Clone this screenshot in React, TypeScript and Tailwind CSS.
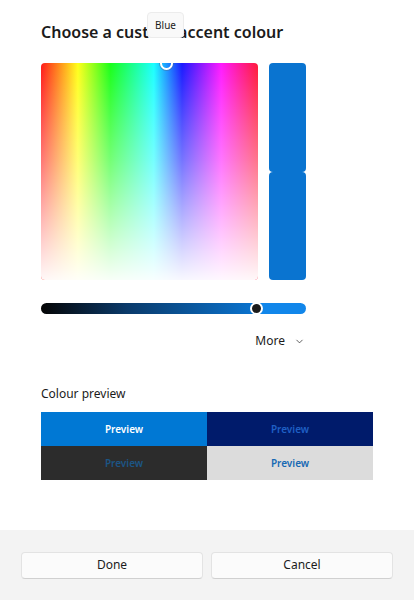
import { ChevronDown } from "lucide-react";

const previews = [
  { bg: "bg-[#0078d4]", fg: "text-white" },
  { bg: "bg-[#001b6b]", fg: "text-[#1f5fc4]" },
  { bg: "bg-[#2c2c2c]", fg: "text-[#1c5585]" },
  { bg: "bg-[#dcdcdc]", fg: "text-[#1769b3]" },
];

function Spectrum() {
  return (
    <div className="relative w-[217px] h-[217px] rounded-[4px] overflow-hidden bg-[linear-gradient(to_right,#ff1a1a_0%,#ffff1a_17%,#1aff1a_32%,#1affff_52%,#1a1aff_65%,#ff1aff_83%,#ff1a3a_100%)]">
      <div className="absolute inset-0 bg-[linear-gradient(to_bottom,rgba(255,255,255,0)_0%,rgba(255,255,255,0.4)_45%,rgba(255,255,255,0.97)_100%)]" />
      <div className="absolute left-[119px] top-[-6px] w-[13px] h-[13px] rounded-full border-2 border-white shadow-[0_0_0_1px_rgba(80,110,150,0.5)]" />
    </div>
  );
}

function Swatch() {
  return (
    <div className="flex flex-col w-[37px] h-[217px]">
      <div className="flex-1 rounded-[4px] bg-[#0a74d0]" />
      <div className="flex-1 rounded-[4px] bg-[#0a74d0]" />
    </div>
  );
}

function ValueSlider() {
  return (
    <div className="relative h-[12px] mt-[22px] flex items-center">
      <div className="w-full h-[11px] rounded-full flex overflow-hidden">
        <div className="w-[215px] h-full bg-[linear-gradient(to_right,#050505,#0a3a6a_40%,#0a74d0)]" />
        <div className="flex-1 h-full bg-[#1186ea]" />
      </div>
      <div className="absolute left-[209px] top-[0px] w-[13px] h-[13px] rounded-full bg-[#1b1b1b] border-2 border-white" />
    </div>
  );
}

export default function App() {
  return (
    <div className="w-[414px] h-[600px] bg-white flex flex-col font-['Noto_Sans',sans-serif] text-[#1b1b1b]">
      <div className="flex-1 px-[41px] pt-[20px] relative">
        <h1 className="text-[16px] leading-[24px] font-semibold">Choose a custom accent colour</h1>
        {/* hover tooltip on the spectrum thumb */}
        <div className="absolute left-[147px] top-[12px] w-[37px] h-[26px] bg-[#f9f9f9] border border-[#ececec] rounded-[4px] flex items-center justify-center text-[10px] leading-none">
          Blue
        </div>

        <div className="mt-[19px] flex gap-[11px]">
          <Spectrum />
          <Swatch />
        </div>

        <div className="w-[265px]">
          <ValueSlider />
          <div className="mt-[18px] flex justify-end items-center gap-[9px] pr-[1px] text-[12px] leading-[18px]">
            <span>More</span>
            <ChevronDown className="w-[11px] h-[11px]" strokeWidth={1.5} />
          </div>
        </div>

        <div className="mt-[36px] text-[12px] leading-[16px]">Colour preview</div>
        <div className="mt-[10px] w-[332px] grid grid-cols-2">
          {previews.map((p, i) => (
            <div key={i} className={`${p.bg} ${p.fg} h-[34px] flex items-center justify-center text-[10px] font-semibold`}>
              Preview
            </div>
          ))}
        </div>
      </div>

      <div className="h-[70px] bg-[#f3f3f3] px-[21px] flex items-center gap-[8px]">
        <button className="flex-1 h-[27px] rounded-[4px] bg-[#fbfbfb] border border-[#e3e3e3] border-b-[#d0d0d0] text-[12px]">
          Done
        </button>
        <button className="flex-1 h-[27px] rounded-[4px] bg-[#fbfbfb] border border-[#e3e3e3] border-b-[#d0d0d0] text-[12px]">
          Cancel
        </button>
      </div>
    </div>
  );
}
